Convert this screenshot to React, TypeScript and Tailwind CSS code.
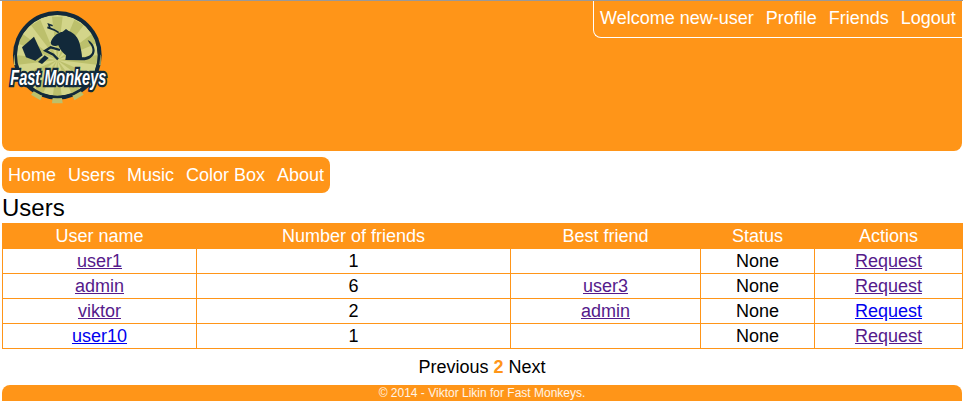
const users = [
  { name: "user1", visited: true, friends: 1, best: "", requestVisited: true },
  { name: "admin", visited: true, friends: 6, best: "user3", requestVisited: true },
  { name: "viktor", visited: true, friends: 2, best: "admin", requestVisited: false },
  { name: "user10", visited: false, friends: 1, best: "", requestVisited: true },
]

const visitedLink = "text-[#551a8b] underline"
const freshLink = "text-[#0000ee] underline"

function Logo() {
  const rays = [0, 30, 60, 90, 120, 150, 180, 210, 240, 270, 300, 330]
  return (
    <svg width="104" height="92" viewBox="24 30 312 276" className="block overflow-visible">
      <circle cx="172" cy="166" r="133" fill="#12293a" />
      <circle cx="172" cy="166" r="122" fill="#d3d58a" />
      {rays.map((a) => (
        <path key={a} d="M172 180 L156 50 L188 50 Z" fill="#bcc06c" transform={`rotate(${a} 172 180)`} />
      ))}
      <circle cx="172" cy="166" r="125" fill="none" stroke="#12293a" strokeWidth="8" />
      {/* monkey */}
      <path
        d="M152 128 C156 112 170 98 188 95 L198 87 L206 93 C222 98 236 114 240 134 C243 150 246 162 246 172 C258 172 270 168 276 158 C280 150 276 138 268 130 L263 120 C274 124 284 138 284 152 C283 170 266 182 244 181 L196 180 L198 166 C190 160 180 150 175 136 C165 140 153 138 152 128 Z"
        fill="#12293a"
      />
      <path d="M176 98 C166 90 156 86 142 82 M150 84 L146 73 L158 77" stroke="#12293a" strokeWidth="5" fill="none" />
      <path d="M180 150 L152 142 L136 152 L160 164 L174 178" stroke="#12293a" strokeWidth="7" fill="none" />
      {/* box */}
      <path d="M66 142 L102 110 L116 140 L128 166 L106 182 L78 172 Z" fill="#12293a" />
      <path d="M114 186 L134 166 L146 174 L126 192 Z" fill="#12293a" />
      {/* banner text */}
      <text
        x="175"
        y="256"
        textAnchor="middle"
        fontFamily="'Liberation Sans', sans-serif"
        fontStyle="italic"
        fontWeight="700"
        fontSize="64"
        textLength="288"
        lengthAdjust="spacingAndGlyphs"
        fill="#ffffff"
        stroke="#12293a"
        strokeWidth="14"
        paintOrder="stroke"
      >
        Fast Monkeys
      </text>
    </svg>
  )
}

export default function App() {
  return (
    <div className="border-t border-[#999999] pl-[2px] pr-[1px] pb-[3px] font-['Liberation_Sans',Arial,sans-serif] text-[18px] leading-[25px] text-black">
      <header className="h-[150px] bg-[#ff9518] rounded-b-[8px] flex justify-between items-start">
        <div className="pl-[6px] pt-[9px]">
          <Logo />
        </div>
        <nav className="h-[37px] w-[370px] mr-[-1px] border-l border-b border-white rounded-bl-[8px] flex items-center gap-[12px] pl-[6px] pb-[1px] text-white">
          <span>Welcome new-user</span>
          <a href="#profile">Profile</a>
          <a href="#friends">Friends</a>
          <a href="#logout">Logout</a>
        </nav>
      </header>

      <nav className="mt-[6px] w-fit h-[36px] bg-[#ff9518] rounded-[8px] flex items-center gap-[12px] px-[6px] text-white">
        <a href="#home">Home</a>
        <a href="#users">Users</a>
        <a href="#music">Music</a>
        <a href="#colorbox">Color Box</a>
        <a href="#about">About</a>
      </nav>

      <h1 className="text-[24px] leading-[30px]">Users</h1>

      <table className="w-[960px] table-fixed border-collapse text-center leading-[23px]">
        <colgroup>
          <col className="w-[194px]" />
          <col className="w-[314px]" />
          <col className="w-[190px]" />
          <col className="w-[114px]" />
          <col className="w-[148px]" />
        </colgroup>
        <thead>
          <tr className="h-[25px] bg-[#ff9518] text-white">
            <th className="border border-[#ff9518] p-0 font-normal">User name</th>
            <th className="border border-[#ff9518] p-0 font-normal">Number of friends</th>
            <th className="border border-[#ff9518] p-0 font-normal">Best friend</th>
            <th className="border border-[#ff9518] p-0 font-normal">Status</th>
            <th className="border border-[#ff9518] p-0 font-normal">Actions</th>
          </tr>
        </thead>
        <tbody>
          {users.map((u) => (
            <tr key={u.name} className="h-[25px]">
              <td className="border border-[#ff9518] p-0">
                <a href="#user" className={u.visited ? visitedLink : freshLink}>{u.name}</a>
              </td>
              <td className="border border-[#ff9518] p-0">{u.friends}</td>
              <td className="border border-[#ff9518] p-0">
                {u.best && <a href="#best" className={visitedLink}>{u.best}</a>}
              </td>
              <td className="border border-[#ff9518] p-0">None</td>
              <td className="border border-[#ff9518] p-0">
                <a href="#request" className={u.requestVisited ? visitedLink : freshLink}>Request</a>
              </td>
            </tr>
          ))}
        </tbody>
      </table>

      <div className="mt-[6px] h-[30px] text-center">
        Previous <b className="text-[#ff9518]">2</b> Next
      </div>

      <footer className="h-[16px] bg-[#ff9518] rounded-t-[8px] text-center text-[12px] leading-[16px] text-white/90">
        © 2014 - Viktor Likin for Fast Monkeys.
      </footer>
    </div>
  )
}
